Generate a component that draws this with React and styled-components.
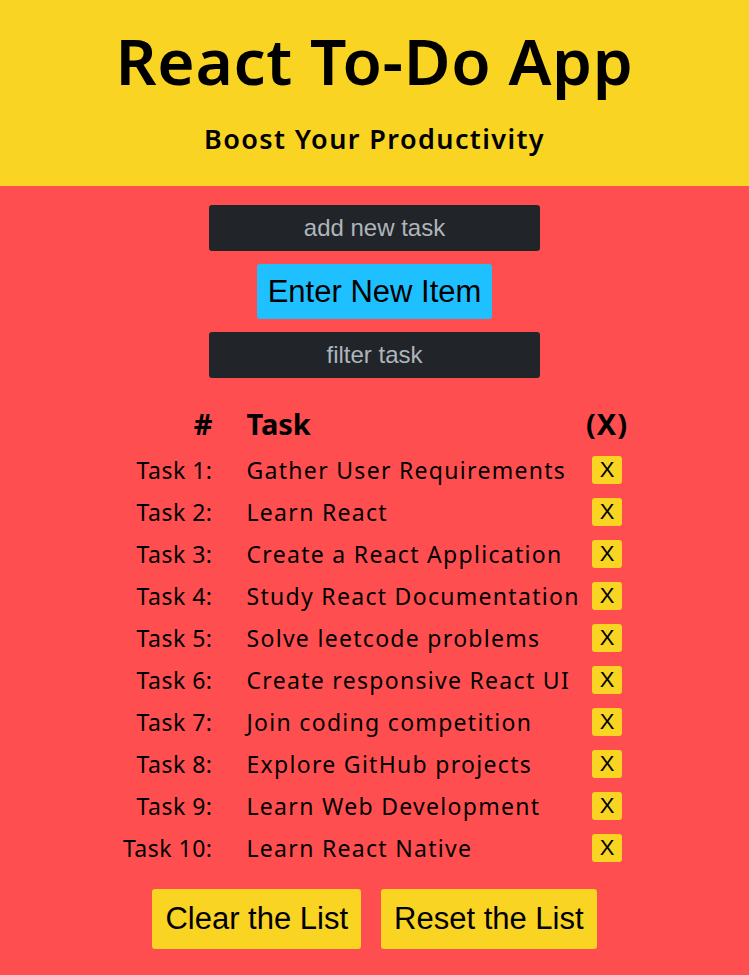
import styled, { createGlobalStyle } from 'styled-components';

const tasks = [
  'Gather User Requirements',
  'Learn React',
  'Create a React Application',
  'Study React Documentation',
  'Solve leetcode problems',
  'Create responsive React UI',
  'Join coding competition',
  'Explore GitHub projects',
  'Learn Web Development',
  'Learn React Native',
];

const GlobalStyle = createGlobalStyle`
  body {
    margin: 0;
    background: #ff4e50;
    font-family: "Noto Sans", "Open Sans", sans-serif;
  }
`;

const App = () => {
  return (
    <>
      <GlobalStyle />
      <Page>
        <Header>
          <Title>React To-Do App</Title>
          <Subtitle>Boost Your Productivity</Subtitle>
        </Header>
        <Main>
          <TaskInput placeholder="add new task" />
          <EnterButton>Enter New Item</EnterButton>
          <TaskInput placeholder="filter task" />
          <Table>
            <HeadCell $align="right">#</HeadCell>
            <HeadCell>Task</HeadCell>
            <HeadCell $align="center">(X)</HeadCell>
            {tasks.map((t, i) => (
              <Row key={i}>
                <NumCell>Task {i + 1}:</NumCell>
                <TaskCell>{t}</TaskCell>
                <XCell>
                  <XButton>X</XButton>
                </XCell>
              </Row>
            ))}
          </Table>
          <Actions>
            <YellowButton>Clear the List</YellowButton>
            <YellowButton>Reset the List</YellowButton>
          </Actions>
        </Main>
      </Page>
    </>
  );
};

const Page = styled.div`
  min-height: 975px;
  display: flex;
  flex-direction: column;
`;

const Header = styled.header`
  background: #f9d423;
  height: 186px;
  display: flex;
  flex-direction: column;
  align-items: center;
  box-sizing: border-box;
  padding-top: 23px;
`;

const Title = styled.h1`
  margin: 0;
  font-size: 64px;
  font-weight: 600;
  letter-spacing: 0.6px;
  line-height: 76px;
  color: #000;
`;

const Subtitle = styled.h3`
  margin: 23px 0 0;
  font-size: 27px;
  font-weight: 600;
  letter-spacing: 1.4px;
  line-height: 34px;
  color: #000;
`;

const Main = styled.main`
  flex: 1;
  background: #ff4e50;
  display: flex;
  flex-direction: column;
  align-items: center;
  padding-top: 19px;
`;

const TaskInput = styled.input`
  width: 331px;
  height: 46px;
  box-sizing: border-box;
  border: none;
  border-radius: 3px;
  background: #212529;
  color: #adb5bd;
  font-family: "Liberation Sans", Arial, sans-serif;
  font-size: 24px;
  text-align: center;
  outline: none;
  &::placeholder {
    color: #adb5bd;
  }
`;

const EnterButton = styled.button`
  margin: 13px 0 13px;
  width: 235px;
  height: 55px;
  border: none;
  border-radius: 3px;
  background: #1fc0ff;
  color: #000;
  font-family: "Liberation Sans", Arial, sans-serif;
  font-size: 31px;
`;

const Table = styled.div`
  margin-top: 26px;
  display: grid;
  grid-template-columns: 126px 339px 43px;
  align-items: center;
`;

const HeadCell = styled.div`
  font-size: 29px;
  font-weight: 700;
  letter-spacing: ${(p) => (p.$align === 'center' ? '1px' : '0')};
  line-height: 40px;
  text-align: ${(p) => p.$align || 'left'};
  padding-right: ${(p) => (p.$align === 'right' ? '34px' : '0')};
  margin-bottom: 5px;
  white-space: nowrap;
`;

const Row = styled.div`
  display: contents;
`;

const NumCell = styled.div`
  font-size: 23px;
  letter-spacing: 0.5px;
  line-height: 42px;
  text-align: right;
  padding-right: 34px;
  white-space: nowrap;
`;

const TaskCell = styled.div`
  font-size: 23px;
  letter-spacing: 1.3px;
  line-height: 42px;
  white-space: nowrap;
`;

const XCell = styled.div`
  display: flex;
  justify-content: center;
`;

const XButton = styled.button`
  width: 30px;
  height: 28px;
  padding: 0;
  border: none;
  border-radius: 3px;
  background: #f9d423;
  color: #000;
  font-family: "Liberation Sans", Arial, sans-serif;
  font-size: 22px;
`;

const Actions = styled.div`
  margin-top: 20px;
  display: flex;
  gap: 20px;
`;

const YellowButton = styled.button`
  height: 60px;
  padding: 0 13px;
  border: none;
  border-radius: 3px;
  background: #f9d423;
  color: #000;
  font-family: "Liberation Sans", Arial, sans-serif;
  font-size: 31px;
`;

export default App;
